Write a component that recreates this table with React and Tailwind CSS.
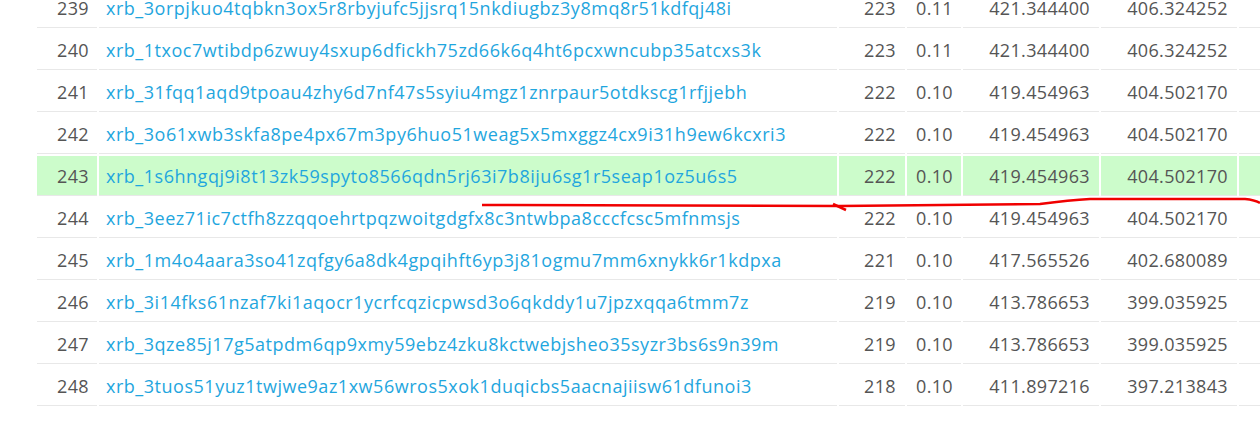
import React from 'react';

const rows = [
  ['239', 'xrb_3orpjkuo4tqbkn3ox5r8rbyjufc5jjsrq15nkdiugbz3y8mq8r51kdfqj48i', '223', '0.11', '421.344400', '406.324252'],
  ['240', 'xrb_1txoc7wtibdp6zwuy4sxup6dfickh75zd66k6q4ht6pcxwncubp35atcxs3k', '223', '0.11', '421.344400', '406.324252'],
  ['241', 'xrb_31fqq1aqd9tpoau4zhy6d7nf47s5syiu4mgz1znrpaur5otdkscg1rfjjebh', '222', '0.10', '419.454963', '404.502170'],
  ['242', 'xrb_3o61xwb3skfa8pe4px67m3py6huo51weag5x5mxggz4cx9i31h9ew6kcxri3', '222', '0.10', '419.454963', '404.502170'],
  ['243', 'xrb_1s6hngqj9i8t13zk59spyto8566qdn5rj63i7b8iju6sg1r5seap1oz5u6s5', '222', '0.10', '419.454963', '404.502170', true],
  ['244', 'xrb_3eez71ic7ctfh8zzqqoehrtpqzwoitgdgfx8c3ntwbpa8cccfcsc5mfnmsjs', '222', '0.10', '419.454963', '404.502170'],
  ['245', 'xrb_1m4o4aara3so41zqfgy6a8dk4gpqihft6yp3j81ogmu7mm6xnykk6r1kdpxa', '221', '0.10', '417.565526', '402.680089'],
  ['246', 'xrb_3i14fks61nzaf7ki1aqocr1ycrfcqzicpwsd3o6qkddy1u7jpzxqqa6tmm7z', '219', '0.10', '413.786653', '399.035925'],
  ['247', 'xrb_3qze85j17g5atpdm6qp9xmy59ebz4zku8kctwebjsheo35syzr3bs6s9n39m', '219', '0.10', '413.786653', '399.035925'],
  ['248', 'xrb_3tuos51yuz1twjwe9az1xw56wros5xok1duqicbs5aacnajiisw61dfunoi3', '218', '0.10', '411.897216', '397.213843'],
  ['249', 'xrb_1kzwpi5bwikbwu4q3o1f9k7z9cf3i1kyo3u7fofiza5dkwnd9539yo1dykh7', '218', '0.10', '411.897216', '397.213843'],
];

export default function App() {
  return (
    <div className="relative w-[1260px] h-[421px] overflow-hidden bg-white" style={{ fontFamily: '"Open Sans", sans-serif' }}>
      <table className="border-separate border-spacing-[2px] ml-[35px] mt-[-14px] text-[18px] text-[#555555] table-fixed w-[1300px]">
        <colgroup>
          <col className="w-[60px]" />
          <col className="w-[738px]" />
          <col className="w-[66px]" />
          <col className="w-[54px]" />
          <col className="w-[136px]" />
          <col className="w-[136px]" />
          <col className="w-[100px]" />
        </colgroup>
        <tbody>
          {rows.map((r) => {
            const cell = `h-[40px] p-0 pt-[2px] border-b border-[#e8e8e8] align-middle tracking-[0.35px] ${r[6] ? 'bg-[#ccfccb]' : ''}`;
            return (
              <tr key={r[0]}>
                <td className={`${cell} text-right pr-[8px]`}>{r[0]}</td>
                <td className={`${cell} pl-[7px]`}>
                  <a href="#" className="text-[#1fa6de] tracking-[0.52px]">{r[1]}</a>
                </td>
                <td className={`${cell} text-right pr-[9px]`}>{r[2]}</td>
                <td className={`${cell} text-right pr-[8px]`}>{r[3]}</td>
                <td className={`${cell} text-right pr-[9px]`}>{r[4]}</td>
                <td className={`${cell} text-right pr-[9px]`}>{r[5]}</td>
                <td className={cell}></td>
              </tr>
            );
          })}
        </tbody>
      </table>
      <svg className="absolute left-0 top-0 pointer-events-none" width="1260" height="421">
        <path
          d="M482 205 L840 206 L1040 204 Q1070 200 1090 199 L1245 199 Q1255 200 1260 203"
          stroke="#f00000"
          strokeWidth="2.5"
          fill="none"
        />
        <path d="M833 204 L846 210" stroke="#f00000" strokeWidth="2.5" fill="none" />
      </svg>
    </div>
  );
}
